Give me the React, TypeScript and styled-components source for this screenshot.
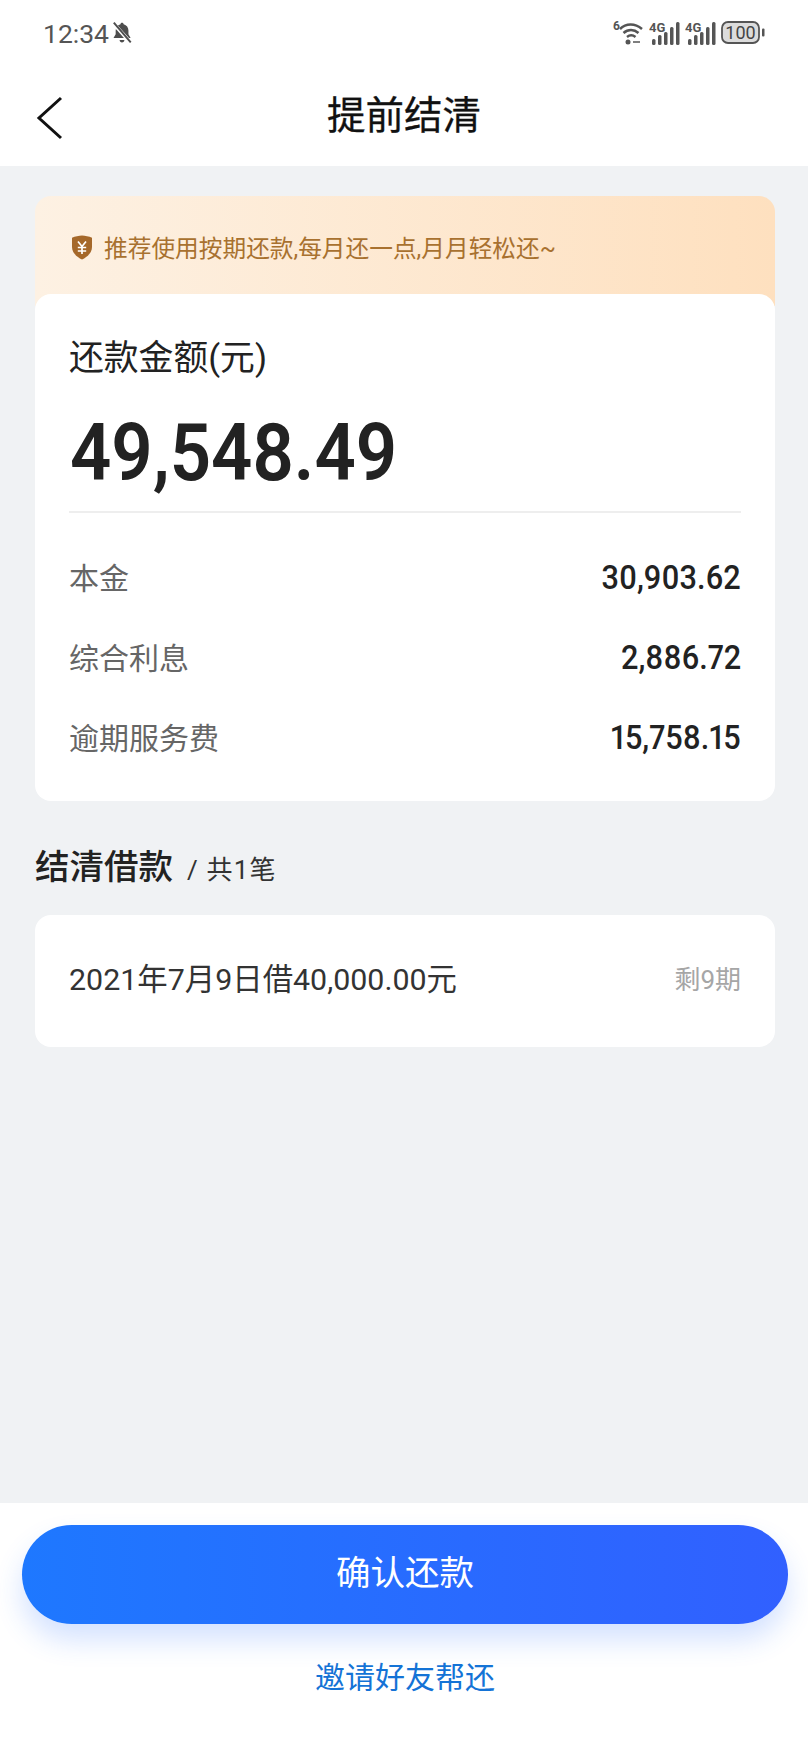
import React from 'react';
import styled, { createGlobalStyle } from 'styled-components';

const CJK = `Roboto, "Noto Sans CJK SC", sans-serif`;

const Global = createGlobalStyle`
  html, body {
    margin: 0;
    padding: 0;
    background: #f0f2f4;
  }
  * {
    box-sizing: border-box;
  }
`;

const Page = styled.div`
  width: 808px;
  height: 1744px;
  display: flex;
  flex-direction: column;
  background: #f0f2f4;
  font-family: ${CJK};
  color: #222;
`;

const Top = styled.header`
  height: 166px;
  background: #fff;
  flex-shrink: 0;
`;

const StatusBar = styled.div`
  height: 66px;
  padding: 0 43px 0 43px;
  display: flex;
  align-items: center;
  justify-content: space-between;
  color: #555;
`;

const Time = styled.div`
  display: flex;
  align-items: center;
  gap: 2px;
  font-size: 26.5px;
`;

const NavBar = styled.div`
  height: 100px;
  padding: 0 0 8px 36px;
  position: relative;
  display: flex;
  align-items: center;
  justify-content: center;
`;

const BackIcon = styled.svg`
  position: absolute;
  left: 36px;
  top: 30px;
`;

const Title = styled.h1`
  margin: 0;
  padding-right: 36px;
  font-size: 38.5px;
  font-weight: 400;
  color: #111;
  -webkit-text-stroke: 0.3px #111;
`;

const Main = styled.main`
  flex: 1;
  padding: 30px 33px 0 35px;
`;

const Notice = styled.div`
  height: 110px;
  margin-bottom: -12px;
  padding: 0 36px 8px 36px;
  border-radius: 16px 16px 0 0;
  display: flex;
  align-items: center;
  gap: 11px;
  background: linear-gradient(90deg, #fdf1e3 0%, #fee0bf 100%);
  color: #a8712f;
  font-size: 23.7px;
`;

const Card = styled.section`
  position: relative;
  background: #fff;
  border-radius: 16px;
`;

const SummaryCard = styled(Card)`
  height: 507px;
  padding: 40px 34px 0;
`;

const SummaryLabel = styled.div`
  font-size: 34.8px;
  line-height: 48px;
`;

const Amount = styled.div`
  margin-top: 25px;
  padding-bottom: 12px;
  border-bottom: 2px solid #eeeeee;
  color: #222;
`;

const AmountValue = styled.div`
  width: fit-content;
  margin-left: 1px;
  font-size: 80px;
  line-height: 92px;
  font-weight: 600;
  transform: scaleX(0.905);
  transform-origin: left center;
`;

const Rows = styled.div`
  margin-top: 23px;
`;

const Row = styled.div`
  height: 80px;
  display: flex;
  align-items: center;
  justify-content: space-between;
`;

const RowLabel = styled.span`
  font-size: 30px;
  color: #666;
`;

const RowValue = styled.span`
  display: inline-block;
  padding-top: 3px;
  font-size: 33px;
  font-weight: 500;
  font-variant-numeric: proportional-nums;
  color: #222;
  transform: scaleX(0.93);
  transform-origin: right center;
`;

const SectionHead = styled.div`
  margin-top: 41px;
  height: 48px;
  display: flex;
  align-items: center;
  gap: 14px;
`;

const SectionTitle = styled.h2`
  margin: 0;
  padding-bottom: 4px;
  font-size: 34.5px;
  font-weight: 500;
  color: #222;
`;

const SectionCount = styled.span`
  padding-top: 2px;
  font-size: 26px;
  letter-spacing: 1.2px;
  color: #333;
`;

const LoanCard = styled(Card)`
  height: 132px;
  margin-top: 25px;
  padding: 0 34px 8px;
  display: flex;
  align-items: center;
  justify-content: space-between;
`;

const LoanText = styled.span`
  font-size: 30.4px;
  color: #333;
`;

const LoanTerm = styled.span`
  font-size: 26px;
  color: #a6a6a6;
`;

const Footer = styled.footer`
  height: 241px;
  flex-shrink: 0;
  padding: 22px 20px 0 22px;
  background: #fff;
  display: flex;
  flex-direction: column;
  align-items: center;
`;

const Confirm = styled.button`
  width: 100%;
  height: 99px;
  padding: 0 0 9px;
  border: 0;
  border-radius: 50px;
  background: linear-gradient(90deg, #1e78ff 0%, #3160ff 100%);
  box-shadow: 0 16px 28px rgba(40, 110, 255, 0.2);
  color: #fff;
  font-family: inherit;
  font-size: 34.5px;
`;

const Invite = styled.a`
  margin-top: 32px;
  font-size: 30px;
  line-height: 44px;
  color: #1473d6;
`;

const MuteBell = () => (
  <svg width="22" height="24" viewBox="0 0 20 22" fill="#4d4d4d">
    <path d="M10 1.5c.9 0 1.5.6 1.5 1.4 2.8.7 4.4 3 4.4 5.8v3.5l2 3.3H2.2l2-3.3V8.7c0-2.800 1.600-5.100 4.400-5.800 0-.8.500-1.400 1.400-1.400z" />
    <path d="M7.800 17.500h4.400c0 1.300-1 2.300-2.200 2.300s-2.200-1-2.200-2.300z" />
    <path d="M2 2l16 18" stroke="#fff" strokeWidth="3.500" />
    <path d="M2.500 1.500l15.500 18" stroke="#4d4d4d" strokeWidth="1.800" />
  </svg>
);

const Signal = () => (
  <svg width="33" height="26" viewBox="0 0 33 26" fill="#555">
    <text x="0" y="12" fontSize="13" fontWeight="700" fontFamily="Roboto, sans-serif">4G</text>
    <rect x="3" y="19" width="3.500" height="6" rx="1.500" />
    <rect x="9" y="15" width="3.500" height="10" rx="1.500" />
    <rect x="15" y="12" width="3.500" height="13" rx="1.500" />
    <rect x="21" y="7" width="3.500" height="18" rx="1.500" />
    <rect x="27" y="2" width="3.500" height="23" rx="1.500" />
  </svg>
);

const StatusIcons = styled.div`
  display: flex;
  align-items: center;
  gap: 3px;
`;

const Wifi = () => (
  <svg width="34" height="26" viewBox="0 0 32 26" fill="none" stroke="#555" strokeWidth="2.500">
    <text x="0" y="10" fontSize="12" fontWeight="700" fill="#555" stroke="none" fontFamily="Roboto, sans-serif">6</text>
    <path d="M7 9c6-6 15-6 22 0" />
    <path d="M10.500 13c4.500-4 10.500-4 15 0" />
    <path d="M14 17c2.500-2 6-2 8.500 0" />
    <circle cx="15" cy="22" r="2.500" fill="#555" stroke="none" />
    <path d="M20 22h7" strokeWidth="1.500" />
  </svg>
);

const Battery = () => (
  <svg width="44" height="26" viewBox="0 0 44 26">
    <rect x="1" y="2" width="37" height="21" rx="6" fill="#dcdcdc" stroke="#555" strokeWidth="1.800" />
    <rect x="41" y="8.500" width="2.500" height="8" rx="1" fill="#555" />
    <text x="19.500" y="19" textAnchor="middle" fontSize="18" fill="#444" fontFamily="Roboto, sans-serif">100</text>
  </svg>
);

const ShieldYuan = () => (
  <svg width="22" height="25" viewBox="0 0 22 25">
    <path d="M11 .5c3 0 7 1 10 2.200v9.300c0 5.500-4.500 10-10 12.500C5.500 22 1 17.500 1 12V2.700C4 1.500 8 .5 11 .5z" fill="#a5682a" />
    <path d="M7 6.500l4 5 4-5M6.800 12.500h8.400M6.800 16h8.400M11 11.500v7.500" fill="none" stroke="#fff" strokeWidth="1.700" />
  </svg>
);

const rows = [
  { label: '本金', value: '30,903.62' },
  { label: '综合利息', value: '2,886.72' },
  { label: '逾期服务费', value: '15,758.15' },
];

const App = () => {
  return (
    <Page>
      <Global />
      <Top>
        <StatusBar>
          <Time>
            12:34
            <MuteBell />
          </Time>
          <StatusIcons>
            <Wifi />
            <Signal />
            <Signal />
            <Battery />
          </StatusIcons>
        </StatusBar>
        <NavBar>
          <BackIcon width="28" height="44" viewBox="0 0 28 44" fill="none" stroke="#111" strokeWidth="3">
            <path d="M25 2L3 22l22 20" />
          </BackIcon>
          <Title>提前结清</Title>
        </NavBar>
      </Top>
      <Main>
        <Notice>
          <ShieldYuan />
          推荐使用按期还款,每月还一点,月月轻松还~
        </Notice>
        <SummaryCard>
          <SummaryLabel>还款金额(元)</SummaryLabel>
          <Amount>
            <AmountValue>49,548.49</AmountValue>
          </Amount>
          <Rows>
            {rows.map((row) => (
              <Row key={row.label}>
                <RowLabel>{row.label}</RowLabel>
                <RowValue>{row.value}</RowValue>
              </Row>
            ))}
          </Rows>
        </SummaryCard>
        <SectionHead>
          <SectionTitle>结清借款</SectionTitle>
          <SectionCount>/ 共1笔</SectionCount>
        </SectionHead>
        <LoanCard>
          <LoanText>2021年7月9日借40,000.00元</LoanText>
          <LoanTerm>剩9期</LoanTerm>
        </LoanCard>
      </Main>
      <Footer>
        <Confirm>确认还款</Confirm>
        <Invite>邀请好友帮还</Invite>
      </Footer>
    </Page>
  );
};

export default App;
